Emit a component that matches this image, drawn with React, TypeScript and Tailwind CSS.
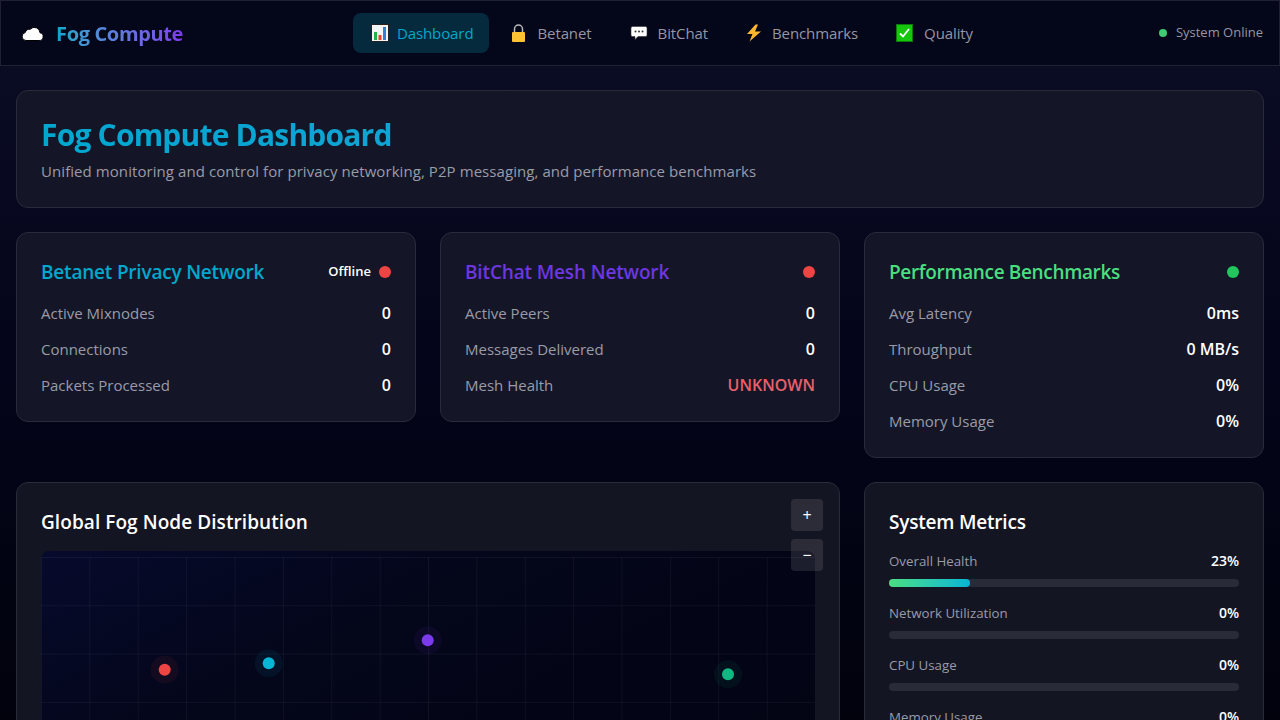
import React from "react";

const font = "font-['Open_Sans','Noto_Sans',sans-serif]";

function Cloud() {
  return (
    <svg width="22" height="15" viewBox="0 0 22 15" className="shrink-0">
      <path d="M5 14.5a4 4 0 0 1-.8-7.9 4.6 4.6 0 0 1 5-3.3A5.6 5.6 0 0 1 19 6.8a3.9 3.9 0 0 1-1.2 7.7Z" fill="#fff" stroke="#000" strokeWidth="1" />
    </svg>
  );
}
function Chart() {
  return (
    <svg width="18" height="18" viewBox="0 0 18 18" className="shrink-0">
      <rect x="0.5" y="0.5" width="17" height="17" fill="#f4f4f4" stroke="#222" />
      <rect x="3" y="8" width="3" height="8" fill="#22b14c" />
      <rect x="7.5" y="11" width="3" height="5" fill="#e8432e" />
      <rect x="12" y="3" width="3" height="13" fill="#2f80d8" />
    </svg>
  );
}
function Lock() {
  return (
    <svg width="15" height="18" viewBox="0 0 15 18" className="shrink-0">
      <path d="M3.5 9V5a4 4 0 0 1 8 0V9" fill="none" stroke="#b9b9b9" strokeWidth="1.5" />
      <rect x="1" y="8" width="13" height="10" rx="1" fill="#fcc233" />
    </svg>
  );
}
function Speech() {
  return (
    <svg width="18" height="16" viewBox="0 0 18 16" className="shrink-0">
      <path d="M2.5 1.5h13a1.5 1.5 0 0 1 1.5 1.5v7a1.5 1.5 0 0 1-1.5 1.5H8L5 14.5v-3H2.5A1.5 1.5 0 0 1 1 10V3a1.5 1.5 0 0 1 1.5-1.5Z" fill="#fff" stroke="#333" strokeWidth="0.6" />
      <circle cx="5.5" cy="6.5" r="1" fill="#333" />
      <circle cx="9" cy="6.5" r="1" fill="#333" />
      <circle cx="12.5" cy="6.5" r="1" fill="#333" />
    </svg>
  );
}
function Bolt() {
  return (
    <svg width="16" height="18" viewBox="0 0 16 18" className="shrink-0">
      <path d="M9.5 0.5 1 10h5.5L3.5 17.5 15 7.5H9L12 .5Z" fill="#f9b62e" />
    </svg>
  );
}
function Check() {
  return (
    <svg width="17" height="18" viewBox="0 0 17 18" className="shrink-0">
      <rect width="17" height="18" fill="#16c60c" />
      <rect x="0.5" y="0.5" width="16" height="17" fill="none" stroke="#0b7a06" />
      <path d="M4 9.5 7 12.5 13 5" fill="none" stroke="#fff" strokeWidth="1.8" />
    </svg>
  );
}

function NavItem({ icon, label, active, box }: { icon: React.ReactNode; label: string; active?: boolean; box: string }) {
  return (
    <div className={`flex h-10 items-center rounded-lg pl-[18px] pr-4 text-[15px] tracking-[-0.1px] ${active ? "bg-[#052a3d] text-[#00a8c9]" : "text-[#9496a4]"}`}>
      <span className={`flex items-center ${box}`}>{icon}</span>
      <span>{label}</span>
    </div>
  );
}

function Row({ label, value, valueClass = "text-white" }: { label: string; value: string; valueClass?: string }) {
  return (
    <div className="flex h-9 items-center justify-between text-[15px]">
      <span className="text-[#9a9ba8]">{label}</span>
      <span className={`text-[16px] font-semibold ${valueClass}`}>{value}</span>
    </div>
  );
}

function StatCard({ title, titleClass, status, dot, rows }: { title: string; titleClass: string; status?: string; dot: string; rows: [string, string, string?][] }) {
  return (
    <section className="rounded-xl border border-[#2a2b3a] bg-[#141627] px-6 pb-[18px] pt-[23px]">
      <div className="mb-[7px] flex h-[32px] items-center justify-between">
        <h2 className={`text-[19px] font-semibold ${titleClass}`}>{title}</h2>
        <div className="flex items-center gap-2 pb-[1px]">
          {status && <span className="text-[13px] font-semibold text-white">{status}</span>}
          <span className={`h-3 w-3 rounded-full ${dot}`} />
        </div>
      </div>
      {rows.map(([l, v, c]) => (
        <Row key={l} label={l} value={v} valueClass={c} />
      ))}
    </section>
  );
}

function Metric({ label, value, width }: { label: string; value: string; width?: string }) {
  return (
    <div className="mb-[18px]">
      <div className="mb-2 flex h-[18px] items-baseline justify-between text-[13.3px] leading-[16px]">
        <span className="text-[#9a9ba8]">{label}</span>
        <span className="text-[14px] font-semibold text-white">{value}</span>
      </div>
      <div className="h-2 rounded-full bg-[#2a2b38]">
        {width && <div className={`h-2 rounded-full bg-gradient-to-r from-[#4ade80] to-[#06b6d4] ${width}`} />}
      </div>
    </div>
  );
}

function Node({ x, y, c, g }: { x: number; y: number; c: string; g: string }) {
  return (
    <g>
      <circle cx={x} cy={y} r="14" fill={g} />
      <circle cx={x} cy={y} r="6" fill={c} />
    </g>
  );
}

function MapCanvas() {
  const v = Array.from({ length: 17 }, (_, i) => i * 48.375 + 0.5);
  const h = Array.from({ length: 5 }, (_, i) => 6.5 + i * 48.3);
  return (
    <div className="h-[400px] rounded-lg bg-gradient-to-br from-[#070a2c] via-[#04061a] via-30% to-[#020310]">
      <svg width="774" height="400" className="block">
        {v.map((x) => (
          <line key={x} x1={x} x2={x} y1="6" y2="400" stroke="#fff" strokeOpacity="0.05" />
        ))}
        {h.map((y) => (
          <line key={y} x1="0" x2="774" y1={y} y2={y} stroke="#fff" strokeOpacity="0.05" />
        ))}
        <Node x={123.7} y={118.7} c="#ef4444" g="rgba(239,68,68,0.07)" />
        <Node x={227.7} y={112.3} c="#06b6d4" g="rgba(6,182,212,0.07)" />
        <Node x={386.7} y={89.3} c="#7c3aed" g="rgba(124,58,237,0.07)" />
        <Node x={687} y={123.3} c="#10b981" g="rgba(16,185,129,0.07)" />
      </svg>
    </div>
  );
}

export default function App() {
  return (
    <div className={`${font} h-[720px] overflow-hidden bg-gradient-to-b from-[#0c0e26] via-[#04051a] to-[#01020c]`}>
      <nav className="flex h-[66px] items-center justify-between border border-[#1f2033] bg-[#04061a] pl-5 pr-4">
        <div className="flex items-center gap-[13px]">
          <Cloud />
          <span className="bg-gradient-to-r from-[#00a8cc] to-[#7c3aed] bg-clip-text pt-[1px] text-[20px] font-bold tracking-[-0.35px] text-transparent">Fog Compute</span>
        </div>
        <div className="flex items-center gap-1">
          <NavItem icon={<Chart />} label="Dashboard" active box="w-[26px]" />
          <NavItem icon={<Lock />} label="Betanet" box="w-[26px]" />
          <NavItem icon={<Speech />} label="BitChat" box="w-[28px]" />
          <NavItem icon={<Bolt />} label="Benchmarks" box="w-[26px]" />
          <NavItem icon={<Check />} label="Quality" box="w-[28px]" />
        </div>
        <div className="flex items-center gap-[9px] text-[13px] text-[#9496a4]">
          <span className="h-2 w-2 rounded-full bg-[#3ecb73]" />
          System Online
        </div>
      </nav>
      <main className="px-4 pt-6">
        <header className="mb-6 h-[118px] rounded-xl border border-[#2a2b3a] bg-[#141627] px-6 pt-5">
          <h1 className="bg-gradient-to-r from-[#00a8d0] to-[#2499e0] bg-clip-text text-[30px] font-bold leading-[48px] tracking-[-0.8px] text-transparent">Fog Compute Dashboard</h1>
          <p className="pt-[1px] text-[15px] tracking-[0.07px] text-[#9a9ba8]">Unified monitoring and control for privacy networking, P2P messaging, and performance benchmarks</p>
        </header>
        <div className="mb-6 grid grid-cols-3 items-start gap-6">
          <StatCard title="Betanet Privacy Network" titleClass="tracking-[-0.2px] text-[#00a8cc]" status="Offline" dot="bg-[#ef4444]" rows={[["Active Mixnodes", "0"], ["Connections", "0"], ["Packets Processed", "0"]]} />
          <StatCard title="BitChat Mesh Network" titleClass="tracking-[-0.15px] text-[#6d36e0]" dot="bg-[#ef4444]" rows={[["Active Peers", "0"], ["Messages Delivered", "0"], ["Mesh Health", "UNKNOWN", "text-[#e9606a]"]]} />
          <StatCard title="Performance Benchmarks" titleClass="tracking-[-0.35px] text-[#4ade80]" dot="bg-[#22c55e]" rows={[["Avg Latency", "0ms"], ["Throughput", "0 MB/s"], ["CPU Usage", "0%"], ["Memory Usage", "0%"]]} />
        </div>
        <div className="grid grid-cols-3 gap-6">
          <section className="relative col-span-2 rounded-xl border border-[#2a2b3a] bg-[#141522] px-6 pt-6">
            <h2 className="mb-3 h-[32px] text-[19px] font-semibold leading-[30px] tracking-[0.07px] text-white">Global Fog Node Distribution</h2>
            <MapCanvas />
            <div className="absolute right-4 top-4 flex flex-col gap-2">
              <button className="flex h-8 w-8 items-center justify-center rounded bg-white/10 text-[16px] text-white">+</button>
              <button className="flex h-8 w-8 items-center justify-center rounded bg-white/10 text-[16px] text-white">−</button>
            </div>
          </section>
          <section className="rounded-xl border border-[#2a2b3a] bg-[#141522] px-6 pt-6">
            <h2 className="mb-[14px] h-[32px] text-[19px] font-semibold leading-[30px] tracking-[-0.2px] text-white">System Metrics</h2>
            <Metric label="Overall Health" value="23%" width="w-[23%]" />
            <Metric label="Network Utilization" value="0%" />
            <Metric label="CPU Usage" value="0%" />
            <Metric label="Memory Usage" value="0%" />
          </section>
        </div>
      </main>
    </div>
  );
}
